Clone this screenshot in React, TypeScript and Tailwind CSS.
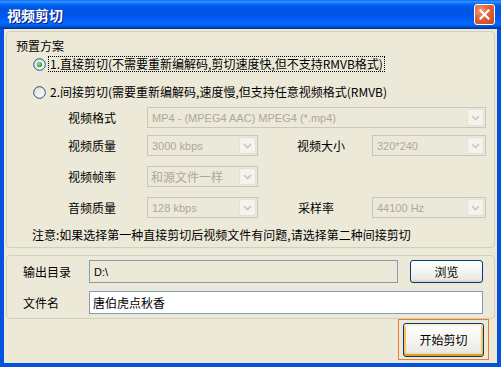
import React from "react";

function Radio({ checked, id }: { checked?: boolean; id: string }) {
  return (
    <svg width="13" height="13" viewBox="0 0 13 13" className="shrink-0">
      <defs>
        <linearGradient id={`rf${id}`} x1="0" y1="0" x2="1" y2="1">
          <stop offset="0" stopColor="#DCDCD7" />
          <stop offset="1" stopColor="#FFFFFF" />
        </linearGradient>
        <radialGradient id={`rd${id}`} cx="0.4" cy="0.4" r="0.6">
          <stop offset="0" stopColor="#8AE88A" />
          <stop offset="1" stopColor="#1F9E1F" />
        </radialGradient>
      </defs>
      <circle cx="6.5" cy="6.5" r="5.8" fill={`url(#rf${id})`} stroke="#1C5180" strokeWidth="1" />
      {checked && <circle cx="6.5" cy="6.5" r="2.6" fill={`url(#rd${id})`} />}
    </svg>
  );
}

function Chevron() {
  return (
    <div className="ml-auto mr-[1px] h-[17px] w-[17px] shrink-0 rounded-[2px] border border-[#E4E2D6] bg-[#F4F3EE] flex items-center justify-center">
      <svg width="9" height="6" viewBox="0 0 9 6">
        <path d="M1 1 L4.5 4.5 L8 1" fill="none" stroke="#C9C7BA" strokeWidth="1.6" />
      </svg>
    </div>
  );
}

function Combo({ w, text, cjk }: { w: string; text: string; cjk?: boolean }) {
  return (
    <div className={`${w} h-[21px] shrink-0 border border-[#C9C7BA] bg-[#ECE9D8] flex items-center`}>
      <span
        className={
          cjk
            ? "pl-[3px] text-[12px] leading-[16px] text-[#ACA899] whitespace-nowrap"
            : "pl-[4px] text-[11px] leading-[16px] text-[#ACA899] whitespace-nowrap font-['Liberation_Sans',sans-serif]"
        }
      >
        {text}
      </span>
      <Chevron />
    </div>
  );
}

export default function App() {
  return (
    <div className="w-[501px] h-[367px] flex flex-col bg-[#0453E0] overflow-hidden font-['Noto_Sans_CJK_SC','Noto_Sans_CJK_JP',sans-serif] text-[12px] leading-[16px] text-black">
      {/* Title bar */}
      <div className="h-[29px] shrink-0 flex items-center justify-between pl-[7px] pr-[6px] bg-[linear-gradient(to_bottom,#0058EE_0%,#3593FF_4%,#288EFF_7%,#127DFF_10%,#036FFC_14%,#0262EE_18%,#0057E5_24%,#0054E3_30%,#0055EB_56%,#005BF5_66%,#026AFE_76%,#0062EF_86%,#0052D6_92%,#0040AB_96%,#003092_100%)]">
        <span className="text-white font-bold text-[14px] leading-[18px] [text-shadow:1px_1px_0_#0A1883]">视频剪切</span>
        <div className="w-[21px] h-[21px] rounded-[3px] border border-white bg-[radial-gradient(circle_at_30%_30%,#F09A7C_0%,#E0603A_45%,#C8451C_100%)] flex items-center justify-center">
          <svg width="11" height="11" viewBox="0 0 11 11">
            <path d="M1.5 1.5 L9.5 9.5 M9.5 1.5 L1.5 9.5" stroke="white" strokeWidth="2.2" strokeLinecap="square" />
          </svg>
        </div>
      </div>

      {/* Body */}
      <div className="flex-1 mx-[4px] mb-[4px] bg-[#ECE9D8] flex flex-col px-[2px] pt-[2px]">
        {/* Group 1 */}
        <div className="h-[217px] shrink-0 border border-[#D0D0BF] rounded-[4px] flex flex-col">
          <div className="mt-[6px] pl-[9px] h-[16px]">预置方案</div>

          <div className="mt-[2px] h-[16px] flex items-center pl-[26px]">
            <Radio checked id="a" />
            <span className="ml-[2px] px-[1px] border border-dotted border-black leading-[14px] whitespace-nowrap">
              1.直接剪切(不需要重新编解码,剪切速度快,但不支持RMVB格式)
            </span>
          </div>

          <div className="mt-[12px] h-[16px] flex items-center pl-[26px]">
            <Radio id="b" />
            <span className="ml-[3px] px-[1px] whitespace-nowrap">
              2.间接剪切(需要重新编解码,速度慢,但支持任意视频格式(RMVB)
            </span>
          </div>

          <div className="mt-[7px] h-[21px] flex items-center pl-[61px]">
            <span className="w-[79px] shrink-0">视频格式</span>
            <Combo w="w-[339px]" text="MP4 - (MPEG4 AAC) MPEG4 (*.mp4)" />
          </div>

          <div className="mt-[7px] h-[21px] flex items-center pl-[61px]">
            <span className="w-[79px] shrink-0">视频质量</span>
            <Combo w="w-[111px]" text="3000 kbps" />
            <span className="ml-[39px] w-[75px] shrink-0">视频大小</span>
            <Combo w="w-[114px]" text="320*240" />
          </div>

          <div className="mt-[10px] h-[21px] flex items-center pl-[61px]">
            <span className="w-[79px] shrink-0">视频帧率</span>
            <Combo w="w-[111px]" text="和源文件一样" cjk />
          </div>

          <div className="mt-[10px] h-[21px] flex items-center pl-[61px]">
            <span className="w-[79px] shrink-0">音频质量</span>
            <Combo w="w-[111px]" text="128 kbps" />
            <span className="ml-[40px] w-[74px] shrink-0">采样率</span>
            <Combo w="w-[114px]" text="44100 Hz" />
          </div>

          <div className="mt-[9px] h-[16px] pl-[25px] whitespace-nowrap">
            注意:如果选择第一种直接剪切后视频文件有问题,请选择第二种间接剪切
          </div>
        </div>

        {/* Group 2 */}
        <div className="mt-[7px] h-[64px] shrink-0 border border-[#D0D0BF] rounded-[4px] flex flex-col">
          <div className="mt-[4px] h-[23px] flex items-center pl-[16px]">
            <span className="w-[66px] shrink-0">输出目录</span>
            <div className="w-[309px] h-[23px] border border-[#7F9DB9] bg-[#ECE9D8] flex items-center pl-[4px] text-[11px] font-['Liberation_Sans',sans-serif]">
              D:\
            </div>
            <div className="ml-[12px] w-[73px] h-[23px] rounded-[3px] border border-[#003C74] bg-[linear-gradient(to_bottom,#FFFFFF_0%,#F6F6F2_40%,#ECEBE6_85%,#D6D0C5_100%)] flex items-center justify-center">
              浏览
            </div>
          </div>
          <div className="mt-[8px] h-[23px] flex items-center pl-[16px]">
            <span className="w-[66px] shrink-0">文件名</span>
            <div className="w-[394px] h-[23px] border border-[#7F9DB9] bg-white flex items-center pl-[3px]">
              唐伯虎点秋香
            </div>
          </div>
        </div>

        {/* Footer */}
        <div className="flex justify-end pr-[6px]">
          <div className="w-[91px] h-[41px] border border-[#EE7A2B] flex items-center justify-center">
            <div className="w-[81px] h-[34px] rounded-[3px] border border-[#003C74] bg-[linear-gradient(to_bottom,#FFFFFF_0%,#F6F6F2_40%,#ECEBE6_85%,#D6D0C5_100%)] shadow-[inset_0_2px_0_#FFF0CF,inset_0_-2px_0_#E5A01A,inset_2px_0_0_#F9C45C,inset_-2px_0_0_#F9C45C] flex items-center justify-center">
              开始剪切
            </div>
          </div>
        </div>
      </div>
    </div>
  );
}
